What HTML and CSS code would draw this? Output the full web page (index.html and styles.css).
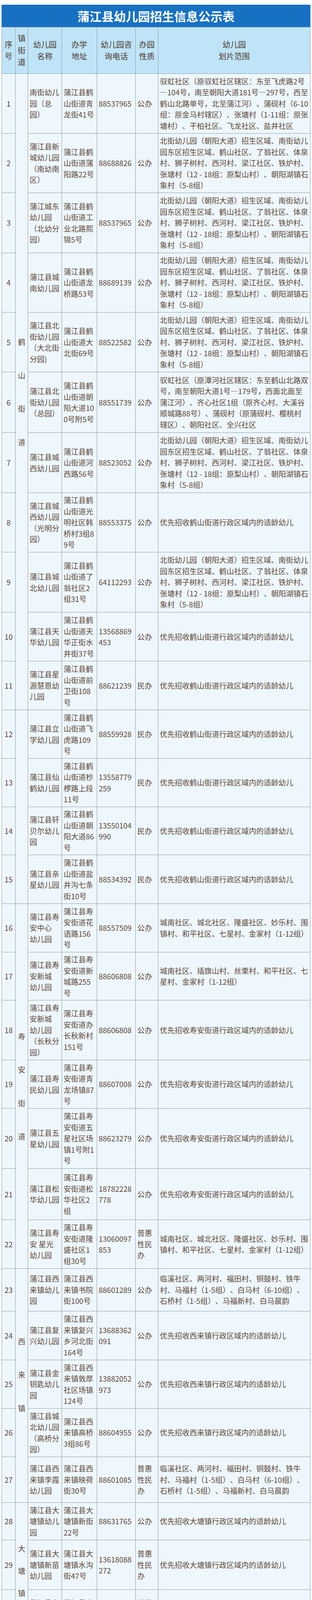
FILE: index.html
```html
<!DOCTYPE html>
<html lang="zh-CN">
<head>
<meta charset="utf-8">
<title>蒲江县幼儿园招生信息公示表</title>
<link rel="stylesheet" href="styles.css">
</head>
<body>
<div class="page">
  <div class="title">蒲江县幼儿园招生信息公示表</div>
  <div class="grid">
    <div class="cell th no">序<br>号</div>
    <div class="cell th town">镇<br>街<br>道</div>
    <div class="cell th name">幼儿园<br>名称</div>
    <div class="cell th addr">办学<br>地址</div>
    <div class="cell th tel">幼儿园咨<br>询电话</div>
    <div class="cell th type">办园<br>性质</div>
    <div class="cell th area">幼儿园<br>划片范围</div>

    <div class="cell no">1</div>
    <div class="cell town sp3 span11">鹤<br>山<br>街<br>道</div>
    <div class="cell name">南街幼儿园（总园）</div>
    <div class="cell addr">蒲江县鹤山街道青龙街41号</div>
    <div class="cell tel">88537965</div>
    <div class="cell type">公办</div>
    <div class="cell area">驭虹社区（原驭虹社区辖区：东至飞虎路2号—104号，南至朝阳大道181号—297号，西至鹤山北路单号，北至蒲江河）、蒲砚村（6-10组：原金马村辖区）、张塘村（1-11组：原张塘村）、干柏社区、飞龙社区、盐井社区</div>

    <div class="cell no">2</div>
    <div class="cell name">蒲江县新城幼儿园（南幼南区）</div>
    <div class="cell addr">蒲江县鹤山街道蒲阳路22号</div>
    <div class="cell tel">88688826</div>
    <div class="cell type">公办</div>
    <div class="cell area">北街幼儿园（朝阳大道）招生区域、南街幼儿园东区招生区域、鹤山社区、了翁社区、体泉村、狮子树村、西河村、梁江社区、铁炉村、张塘村（12 - 18组：原梨山村）、朝阳湖镇石象村（5-8组）</div>

    <div class="cell no">3</div>
    <div class="cell name">蒲江城东幼儿园（北幼分园）</div>
    <div class="cell addr">蒲江县鹤山街道工业北路熙锦5号</div>
    <div class="cell tel">88537965</div>
    <div class="cell type">公办</div>
    <div class="cell area">北街幼儿园（朝阳大道）招生区域、南街幼儿园东区招生区域、鹤山社区、了翁社区、体泉村、狮子树村、西河村、梁江社区、铁炉村、张塘村（12 - 18组：原梨山村）、朝阳湖镇石象村（5-8组）</div>

    <div class="cell no">4</div>
    <div class="cell name">蒲江县城南幼儿园</div>
    <div class="cell addr">蒲江县鹤山街道龙桥路53号</div>
    <div class="cell tel">88689139</div>
    <div class="cell type">公办</div>
    <div class="cell area">北街幼儿园（朝阳大道）招生区域、南街幼儿园东区招生区域、鹤山社区、了翁社区、体泉村、狮子树村、西河村、梁江社区、铁炉村、张塘村（12 - 18组：原梨山村）、朝阳湖镇石象村（5-8组）</div>

    <div class="cell no">5</div>
    <div class="cell name">蒲江县北街幼儿园（大北街分园)</div>
    <div class="cell addr">蒲江县鹤山街道大北街69号</div>
    <div class="cell tel">88522582</div>
    <div class="cell type">公办</div>
    <div class="cell area">北街幼儿园（朝阳大道）招生区域、南街幼儿园东区招生区域、鹤山社区、了翁社区、体泉村、狮子树村、西河村、梁江社区、铁炉村、张塘村（12 - 18组：原梨山村）、朝阳湖镇石象村（5-8组）</div>

    <div class="cell no">6</div>
    <div class="cell name">蒲江县北街幼儿园（总园）</div>
    <div class="cell addr">蒲江县鹤山街道朝阳大道100号附5号</div>
    <div class="cell tel">88551739</div>
    <div class="cell type">公办</div>
    <div class="cell area">驭虹社区（原潭河社区辖区：东至鹤山北路双号，南至朝阳大道1号—179号，西面北面至蒲江河）、齐心社区1组（原齐心村、大溪谷顺城路88号）、蒲砚村（原蒲砚村、樱桃村辖区）、朝阳社区、全兴社区</div>

    <div class="cell no">7</div>
    <div class="cell name">蒲江县城西幼儿园</div>
    <div class="cell addr">蒲江县鹤山街道河西路56号</div>
    <div class="cell tel">88523052</div>
    <div class="cell type">公办</div>
    <div class="cell area">北街幼儿园（朝阳大道）招生区域、南街幼儿园东区招生区域、鹤山社区、了翁社区、体泉村、狮子树村、西河村、梁江社区、铁炉村、张塘村（12 - 18组：原梨山村）、朝阳湖镇石象村（5-8组）</div>

    <div class="cell no">8</div>
    <div class="cell name">蒲江县城西幼儿园（光明分园）</div>
    <div class="cell addr">蒲江县鹤山街道光明社区韩桥村3组89号</div>
    <div class="cell tel">88553375</div>
    <div class="cell type">公办</div>
    <div class="cell area">优先招收鹤山街道行政区域内的适龄幼儿</div>

    <div class="cell no">9</div>
    <div class="cell name">蒲江县城北幼儿园</div>
    <div class="cell addr">蒲江县鹤山街道了翁社区2组31号</div>
    <div class="cell tel">64112293</div>
    <div class="cell type">公办</div>
    <div class="cell area">北街幼儿园（朝阳大道）招生区域、南街幼儿园东区招生区域、鹤山社区、了翁社区、体泉村、狮子树村、西河村、梁江社区、铁炉村、张塘村（12 - 18组：原梨山村）、朝阳湖镇石象村（5-8组）</div>

    <div class="cell no">10</div>
    <div class="cell name">蒲江县天华幼儿园</div>
    <div class="cell addr">蒲江县鹤山街道天华正街水井街37号</div>
    <div class="cell tel">13568869453</div>
    <div class="cell type">公办</div>
    <div class="cell area">优先招收鹤山街道行政区域内的适龄幼儿</div>

    <div class="cell no">11</div>
    <div class="cell name">蒲江县星源慧恩幼儿园</div>
    <div class="cell addr">蒲江县鹤山街道前卫街108号</div>
    <div class="cell tel">88621239</div>
    <div class="cell type">民办</div>
    <div class="cell area">优先招收鹤山街道行政区域内的适龄幼儿</div>

    <div class="cell no">12</div>
    <div class="cell town span4"></div>
    <div class="cell name">蒲江县立学幼儿园</div>
    <div class="cell addr">蒲江县鹤山街道飞虎路109号</div>
    <div class="cell tel">88559928</div>
    <div class="cell type">民办</div>
    <div class="cell area">优先招收鹤山街道行政区域内的适龄幼儿</div>

    <div class="cell no">13</div>
    <div class="cell name">蒲江县仙鹤幼儿园</div>
    <div class="cell addr">蒲江县鹤山街道杪椤路上段11号</div>
    <div class="cell tel">13558779259</div>
    <div class="cell type">民办</div>
    <div class="cell area">优先招收鹤山街道行政区域内的适龄幼儿</div>

    <div class="cell no">14</div>
    <div class="cell name">蒲江县轩贝尔幼儿园</div>
    <div class="cell addr">蒲江县鹤山街道朝阳大道86号</div>
    <div class="cell tel">13550104990</div>
    <div class="cell type">民办</div>
    <div class="cell area">优先招收鹤山街道行政区域内的适龄幼儿</div>

    <div class="cell no">15</div>
    <div class="cell name">蒲江县亲星幼儿园</div>
    <div class="cell addr">蒲江县鹤山街道盐井沟七条街10号</div>
    <div class="cell tel">88534392</div>
    <div class="cell type">民办</div>
    <div class="cell area">优先招收鹤山街道行政区域内的适龄幼儿</div>

    <div class="cell no">16</div>
    <div class="cell town sp3 span7">寿<br>安<br>街<br>道</div>
    <div class="cell name">蒲江县寿安中心<br>幼儿园</div>
    <div class="cell addr">蒲江县寿安街道花语路156号</div>
    <div class="cell tel">88557509</div>
    <div class="cell type">公办</div>
    <div class="cell area">城南社区、城北社区、隆盛社区、妙乐村、围镇村、和平社区、七星村、金家村（1-12组）</div>

    <div class="cell no">17</div>
    <div class="cell name">蒲江县寿安新城<br>幼儿园</div>
    <div class="cell addr">蒲江县寿安街道新城路255号</div>
    <div class="cell tel">88606808</div>
    <div class="cell type">公办</div>
    <div class="cell area">城南社区、插旗山村、丝栗村、和平社区、七星村、金家村（1-12组）</div>

    <div class="cell no">18</div>
    <div class="cell name">蒲江县寿安新城<br>幼儿园（长秋分园）</div>
    <div class="cell addr">蒲江县寿安街道办长秋新村151号</div>
    <div class="cell tel">88606808</div>
    <div class="cell type">公办</div>
    <div class="cell area">优先招收寿安街道行政区域内的适龄幼儿</div>

    <div class="cell no">19</div>
    <div class="cell name">蒲江县寿民幼儿园</div>
    <div class="cell addr">蒲江县寿安街道青龙场镇87号</div>
    <div class="cell tel">88607008</div>
    <div class="cell type">公办</div>
    <div class="cell area">优先招收寿安街道行政区域内的适龄幼儿</div>

    <div class="cell no">20</div>
    <div class="cell name">蒲江县五星幼儿园</div>
    <div class="cell addr">蒲江县寿安街道五星社区场镇1号附1号</div>
    <div class="cell tel">88623279</div>
    <div class="cell type">公办</div>
    <div class="cell area">优先招收寿安街道行政区域内的适龄幼儿</div>

    <div class="cell no">21</div>
    <div class="cell name">蒲江县松华幼儿园</div>
    <div class="cell addr">蒲江县寿安街道松华社区2组</div>
    <div class="cell tel">18782228778</div>
    <div class="cell type">公办</div>
    <div class="cell area">优先招收寿安街道行政区域内的适龄幼儿</div>

    <div class="cell no">22</div>
    <div class="cell name">蒲江县寿安 星光<br>幼儿园</div>
    <div class="cell addr">蒲江县寿安街道隆盛社区1组30号</div>
    <div class="cell tel">13060097853</div>
    <div class="cell type">普惠性民办</div>
    <div class="cell area">城南社区、城北社区、隆盛社区、妙乐村、围镇村、和平社区、七星村、金家村（1-12组）</div>

    <div class="cell no">23</div>
    <div class="cell town sp3 span5 xilai">西<br>来<br>镇</div>
    <div class="cell name">蒲江县西来镇幼儿园</div>
    <div class="cell addr">蒲江县西来镇书院街100号</div>
    <div class="cell tel">88601289</div>
    <div class="cell type">公办</div>
    <div class="cell area">临溪社区、两河村、福田村、铜鼓村、铁牛村、马福村（1-5组）、白马村（6-10组）、石桥村（1-5组）、马福新村、白马晨韵</div>

    <div class="cell no">24</div>
    <div class="cell name">蒲江县复兴幼儿园</div>
    <div class="cell addr">蒲江县西来镇复兴乡河北街164号</div>
    <div class="cell tel">13688362091</div>
    <div class="cell type">公办</div>
    <div class="cell area">优先招收西来镇行政区域内的适龄幼儿</div>

    <div class="cell no">25</div>
    <div class="cell name">蒲江县金钥匙幼儿园</div>
    <div class="cell addr">蒲江县西来镇敦厚社区场镇124号</div>
    <div class="cell tel">13882052973</div>
    <div class="cell type">公办</div>
    <div class="cell area">优先招收西来镇行政区域内的适龄幼儿</div>

    <div class="cell no">26</div>
    <div class="cell name">蒲江县城北幼儿园（高桥分园）</div>
    <div class="cell addr">蒲江县西来镇高桥3组86号</div>
    <div class="cell tel">88604955</div>
    <div class="cell type">公办</div>
    <div class="cell area">优先招收西来镇行政区域内的适龄幼儿</div>

    <div class="cell no">27</div>
    <div class="cell name">蒲江县西来镇李霞幼儿园</div>
    <div class="cell addr">蒲江县西来镇映荷街30号</div>
    <div class="cell tel">88601085</div>
    <div class="cell type">普惠性民办</div>
    <div class="cell area">临溪社区、两河村、福田村、铜鼓村、铁牛村、马福村（1-5组）、白马村（6-10组）、石桥村（1-5组）、马福新村、白马晨韵</div>

    <div class="cell no">28</div>
    <div class="cell town sp2 span3">大<br>塘<br>镇</div>
    <div class="cell name">蒲江县大塘镇幼儿园</div>
    <div class="cell addr">蒲江县大塘镇新街22号</div>
    <div class="cell tel">88631765</div>
    <div class="cell type">公办</div>
    <div class="cell area">优先招收大塘镇行政区域内的适龄幼儿</div>

    <div class="cell no">29</div>
    <div class="cell name">蒲江县大塘镇新苗幼儿园</div>
    <div class="cell addr">蒲江县大塘镇水沟街47号</div>
    <div class="cell tel">13618088272</div>
    <div class="cell type">普惠性民办</div>
    <div class="cell area">优先招收大塘镇行政区域内的适龄幼儿</div>

    <div class="cell no">30</div>
    <div class="cell name">蒲江县大塘镇雨朵幼儿园</div>
    <div class="cell addr">蒲江县大塘镇北街24号</div>
    <div class="cell tel">13980479857</div>
    <div class="cell type">普惠性民办</div>
    <div class="cell area">优先招收大塘镇行政区域内的适龄幼儿</div>

    <div class="cell no">31</div>
    <div class="cell town span2">朝<br>阳<br>湖<br>镇</div>
    <div class="cell name">蒲江县<br>朝阳湖镇<br>幼儿园</div>
    <div class="cell addr">蒲江县朝阳湖镇温泉街259号</div>
    <div class="cell tel">88591121</div>
    <div class="cell type">公办</div>
    <div class="cell area">优先招收朝阳湖镇行政区域内的适龄幼儿</div>

    <div class="cell no">32</div>
    <div class="cell name">蒲江县白云幼儿园</div>
    <div class="cell addr">蒲江县朝阳湖镇白云村朝阳路75号</div>
    <div class="cell tel">64119786</div>
    <div class="cell type">公办</div>
    <div class="cell area">优先招收朝阳湖镇行政区域内的适龄幼儿</div>

    <div class="cell no">33</div>
    <div class="cell town">甘<br>溪<br>镇</div>
    <div class="cell name">蒲江县甘溪镇幼儿园</div>
    <div class="cell addr">蒲江县甘溪镇北街34号</div>
    <div class="cell tel">88641556</div>
    <div class="cell type">公办</div>
    <div class="cell area">优先招收甘溪镇行政区域内的适龄幼儿</div>

    <div class="cell no">34</div>
    <div class="cell town">成<br>佳<br>镇</div>
    <div class="cell name">蒲江县成佳镇幼儿园</div>
    <div class="cell addr">蒲江县成佳镇朝阳街30号</div>
    <div class="cell tel">13541053584</div>
    <div class="cell type">公办</div>
    <div class="cell area">优先招收成佳镇行政区域内的适龄幼儿</div>

    <div class="cell no">35</div>
    <div class="cell town span2">大<br>兴<br>镇</div>
    <div class="cell name">蒲江县南街幼儿园（大兴分园）</div>
    <div class="cell addr">蒲江县大兴镇古榕东街4号</div>
    <div class="cell tel">88630829</div>
    <div class="cell type">公办</div>
    <div class="cell area">优先招收大兴镇行政区域、成佳镇麟凤村（4、5、7组）内的适龄幼儿</div>

    <div class="cell no">36</div>
    <div class="cell name">蒲江县大兴镇新苗幼儿园</div>
    <div class="cell addr">蒲江县大兴镇九仙路中段35号附1号</div>
    <div class="cell tel">88630122</div>
    <div class="cell type">普惠性民办</div>
    <div class="cell area">优先招收大兴镇行政区域、成佳镇麟凤村（4、5、7组）内的适龄幼儿</div>
  </div>
</div>
</body>
</html>
```

FILE: styles.css
```css
html, body {
  margin: 0;
  padding: 0;
  background: #ffffff;
}

body {
  font-family: "Noto Sans CJK SC", "Noto Sans", sans-serif;
  color: #5b4636;
}

.page {
  padding: 12px 4px 14px 4px;
}

.title {
  width: 792px;
  height: 57px;
  line-height: 57px;
  background: #1771c3;
  color: #ffffff;
  font-size: 31px;
  font-weight: 700;
  text-align: center;
}

.grid {
  width: 792px;
  box-sizing: border-box;
  display: grid;
  grid-template-columns: 34px 31px 86px 89px 98px 57px 389px;
  grid-template-rows:
    118px
    152px 151px 153px 151px 152px 154px 153px 151px 153px
    124px 124px 123px 123px 122px 124px 123px 122px
    152px 123px 153px 130px 124px
    108px 124px 123px 123px 116px
    95px 126px 123px
    123px 123px
    115px 95px 123px 145px;
  gap: 1px;
  border: 1px solid #8f9aa4;
  background: #8f9aa4;
}

.cell {
  display: flex;
  flex-direction: column;
  justify-content: center;
  padding: 0 4px;
  background: #eef7fe;
  font-size: 19px;
  line-height: 28.5px;
  text-align: left;
  min-width: 0;
  text-spacing-trim: space-all;
}

.no { grid-column: 1; text-align: center; padding: 0 2px; }
.town { grid-column: 2; text-align: center; padding: 0 2px; }
.name { grid-column: 3; }
.addr { grid-column: 4; word-break: break-all; }
.tel { grid-column: 5; word-break: break-all; }
.type { grid-column: 6; }
.area { grid-column: 7; }

.cell.th {
  background: #bfe4f8;
  color: #4b3a2d;
  text-align: center;
  font-size: 20px;
  line-height: 30.5px;
}

.span11 { grid-row: span 11; }
.span7 { grid-row: span 7; }
.span5 { grid-row: span 5; }
.span4 { grid-row: span 4; }
.span3 { grid-row: span 3; }
.span2 { grid-row: span 2; }

.sp3 { line-height: 85.5px; }
.sp2 { line-height: 57px; }
.xilai { padding-bottom: 56px; }
```
